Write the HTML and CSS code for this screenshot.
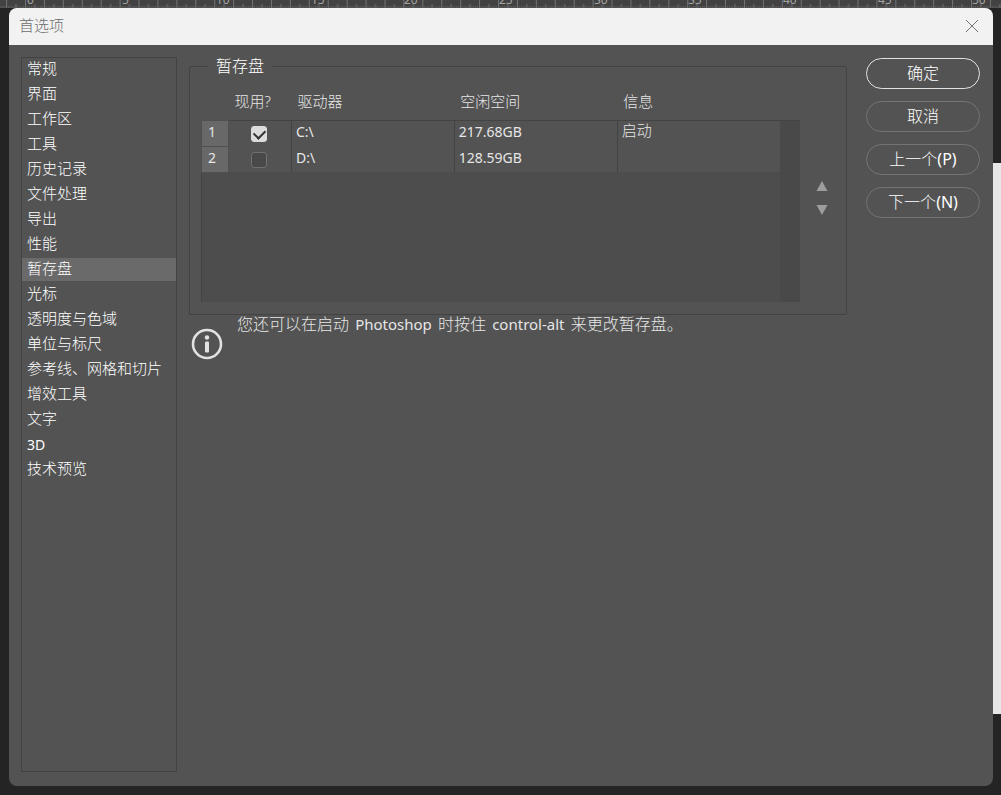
FILE: index.html
```html
<!DOCTYPE html>
<html lang="zh-CN">
<head>
<meta charset="utf-8">
<meta name="viewport" content="width=device-width, initial-scale=1">
<title>首选项</title>
<link rel="stylesheet" href="styles.css">
</head>
<body>
<svg class="ruler" aria-hidden="true">
  <defs>
    <pattern id="ticks" x="25" y="0" width="18.92" height="8" patternUnits="userSpaceOnUse">
      <path d="M2.4 6v2M4.3 6v2M6.2 6v2M8 6v2M11.8 6v2M13.7 6v2M15.6 6v2M17.5 6v2" stroke="#5c5c5c" stroke-width="1"/>
      <path d="M.5 0v8M9.9 4v4" stroke="#727272" stroke-width="1"/>
    </pattern>
  </defs>
  <rect width="100%" height="8" fill="url(#ticks)"/>
  <g class="ruler-label">
    <text x="27" y="4">0</text>
    <text x="122" y="4">5</text>
    <text x="216" y="4">10</text>
    <text x="311" y="4">15</text>
    <text x="404" y="4">20</text>
    <text x="499" y="4">25</text>
    <text x="594" y="4">30</text>
    <text x="688" y="4">35</text>
    <text x="783" y="4">40</text>
    <text x="878" y="4">45</text>
    <text x="972" y="4">50</text>
  </g>
</svg>
<div class="workspace">
  <section class="dialog" role="dialog" aria-labelledby="dialog-title">
    <header class="titlebar">
      <h1 class="title" id="dialog-title">首选项</h1>
      <button class="close" type="button" aria-label="关闭">
        <svg width="14" height="14" viewBox="0 0 14 14"><path d="M1 1l12 12M13 1L1 13" stroke="#757575" fill="none"/></svg>
      </button>
    </header>
    <div class="content">
      <nav class="sidebar">
        <button type="button" class="item">常规</button>
        <button type="button" class="item">界面</button>
        <button type="button" class="item">工作区</button>
        <button type="button" class="item">工具</button>
        <button type="button" class="item">历史记录</button>
        <button type="button" class="item">文件处理</button>
        <button type="button" class="item">导出</button>
        <button type="button" class="item">性能</button>
        <button type="button" class="item selected" aria-current="page">暂存盘</button>
        <button type="button" class="item">光标</button>
        <button type="button" class="item">透明度与色域</button>
        <button type="button" class="item">单位与标尺</button>
        <button type="button" class="item">参考线、网格和切片</button>
        <button type="button" class="item">增效工具</button>
        <button type="button" class="item">文字</button>
        <button type="button" class="item latin">3D</button>
        <button type="button" class="item">技术预览</button>
      </nav>
      <main class="panel">
        <fieldset class="group">
          <legend class="legend">暂存盘</legend>
          <div class="group-body">
            <table class="disks">
              <colgroup>
                <col class="col-num"><col class="col-active"><col><col><col><col class="col-scroll">
              </colgroup>
              <thead>
                <tr><td></td><th scope="col">现用?</th><th scope="col">驱动器</th><th scope="col">空闲空间</th><th scope="col">信息</th><td></td></tr>
              </thead>
              <tbody>
                <tr class="disk">
                  <th scope="row">1</th>
                  <td class="active"><input class="check" type="checkbox" aria-label="现用 C:\" checked></td>
                  <td>C:\</td><td>217.68GB</td><td class="info">启动</td>
                  <td class="scroll" rowspan="3"></td>
                </tr>
                <tr class="disk">
                  <th scope="row">2</th>
                  <td class="active"><input class="check" type="checkbox" aria-label="现用 D:\"></td>
                  <td>D:\</td><td>128.59GB</td><td></td>
                </tr>
                <tr class="rest"><td colspan="5"></td></tr>
              </tbody>
            </table>
            <div class="order">
              <button type="button" class="arrow" aria-label="上移"><svg width="12" height="10" viewBox="0 0 12 10"><path d="M6 0l5.5 10H.5z" fill="#9d9d9d"/></svg></button>
              <button type="button" class="arrow" aria-label="下移"><svg width="12" height="10" viewBox="0 0 12 10"><path d="M6 10L.5 0h11z" fill="#9d9d9d"/></svg></button>
            </div>
          </div>
        </fieldset>
        <div class="note">
          <svg class="note-icon" width="32" height="32" viewBox="0 0 32 32" aria-hidden="true">
            <circle cx="16" cy="16" r="14" fill="none" stroke="#e2e2e2" stroke-width="2.6"/>
            <circle cx="16" cy="9.5" r="2.2" fill="#e2e2e2"/>
            <rect x="14" y="13.5" width="4" height="11" rx="1" fill="#e2e2e2"/>
          </svg>
          <p class="note-text">您还可以在启动 <span class="word">Photoshop</span> 时按住 <span class="word">control-alt</span> 来更改暂存盘。</p>
        </div>
      </main>
      <div class="actions">
        <button type="button" class="btn primary">确定</button>
        <button type="button" class="btn">取消</button>
        <button type="button" class="btn">上一个<span class="key">(P)</span></button>
        <button type="button" class="btn">下一个<span class="key">(N)</span></button>
      </div>
    </div>
  </section>
</div>
</body>
</html>
```
FILE: styles.css
```css
* { box-sizing: border-box; }

body {
  margin: 0;
  min-height: 100vh;
  display: flex;
  flex-direction: column;
  background: #242424;
  color: #fff;
  font: 15px/21px "Noto Sans", "Noto Sans CJK SC", sans-serif;
  font-weight: 300;
}

button {
  font: inherit;
  color: inherit;
  background: none;
  border: 0;
  padding: 0;
}

.ruler {
  display: block;
  width: 100%;
  height: 8px;
  background: #424242;
  overflow: hidden;
}

.ruler-label {
  fill: #a2a2a2;
  font-size: 12px;
  font-weight: 400;
}

.workspace {
  flex: 1;
  display: flex;
  padding: 0 8px 9px 9px;
  background: linear-gradient(#e6e6e6, #e6e6e6) right 155px / 12px 551px no-repeat #242424;
}

.dialog {
  flex: 1;
  display: flex;
  flex-direction: column;
  background: #535353;
  border-radius: 8px;
  overflow: hidden;
}

.titlebar {
  display: flex;
  align-items: center;
  justify-content: space-between;
  height: 37px;
  padding: 0 14px 2px 10px;
  background: #f2f2f2;
  color: #6c6c6c;
}

.title {
  margin: 0;
  font-size: 15px;
  font-weight: 300;
}

.close { display: flex; }

.content {
  flex: 1;
  display: flex;
  padding: 12px 13px 14px 12px;
}

.sidebar {
  width: 156px;
  display: flex;
  flex-direction: column;
  gap: 2px;
  border: 1px solid #424242;
}

.item {
  height: 23px;
  padding: 0 0 2px 5px;
  text-align: left;
  white-space: nowrap;
}

.item.selected { background: #6a6a6a; }

.item.latin {
  padding-bottom: 0;
  font-size: 14px;
  font-weight: 400;
}

.panel {
  flex: 1;
  margin: 0 19px 0 12px;
}

.group {
  margin: 0;
  min-width: 0;
  padding: 0 0 12px 11px;
  border: 1px solid #424242;
  border-radius: 2px;
}

.legend {
  margin-left: 7px;
  padding: 0 8px;
  font-size: 16px;
  line-height: 18px;
}

.group-body { display: flex; }

.disks {
  flex: 1;
  width: 100%;
  table-layout: fixed;
  border-collapse: collapse;
  color: #e6e6e6;
}

.col-num { width: 27px; }
.col-active { width: 63px; }
.col-scroll { width: 20px; }

.disks td,
.disks th {
  padding: 0;
  font-weight: 300;
  text-align: left;
  vertical-align: top;
}

.disks thead td,
.disks thead th {
  height: 45px;
  padding: 16px 0 0 6px;
}

.disk {
  height: 26px;
  font-size: 14px;
}

.disks .disk td {
  padding-left: 4px;
  border-left: 1px solid #434343;
  border-top: 1px solid #434343;
  font-weight: 400;
}

.disks .disk + .disk td { border-top-color: #535353; }

.disks .disk th {
  padding-left: 6px;
  background: #686868;
  border: 1px solid #505050;
  font-weight: 400;
}

.disks .disk .info {
  font-size: 15px;
  font-weight: 300;
  line-height: 19px;
}

.disks .disk .active {
  padding: 5px 2px 0 0;
}

.check {
  appearance: none;
  display: block;
  width: 16px;
  height: 16px;
  margin: 0 auto;
  border: 1px solid #707070;
  border-radius: 3px;
  background: #494949;
}

.check:checked {
  border-color: #dcdcdc;
  background: #dcdcdc;
  display: grid;
  place-items: center;
}

.check:checked::before {
  content: "";
  width: 9px;
  height: 6px;
  margin-bottom: 2px;
  border: solid #333;
  border-width: 0 0 2px 2px;
  transform: rotate(-45deg);
}

.disks .rest td {
  height: 130px;
  background: #4d4d4d;
  border-left: 1px solid #434343;
}

.disks .disk .scroll {
  background: #494949;
  border-left: 0;
}

.order {
  flex: none;
  width: 46px;
  display: flex;
  flex-direction: column;
  align-items: center;
  gap: 14px;
  padding: 106px 2px 0 0;
}

.arrow { display: flex; }

.note {
  display: flex;
  gap: 14px;
  padding-left: 2px;
}

.note-icon {
  flex: none;
  margin-top: 13px;
}

.note-text {
  margin: 0;
  color: #e6e6e6;
  font-size: 16px;
  line-height: 19px;
}

.word {
  padding: 0 2px;
  font-size: 15px;
  font-weight: 400;
}

.actions {
  width: 114px;
  display: flex;
  flex-direction: column;
  gap: 12px;
  padding-top: 1px;
}

.btn {
  height: 31px;
  border: 1px solid #747474;
  border-radius: 16px;
  font-size: 16px;
}

.btn.primary { border-color: #e2e2e2; }

.key { font-weight: 400; }
```
